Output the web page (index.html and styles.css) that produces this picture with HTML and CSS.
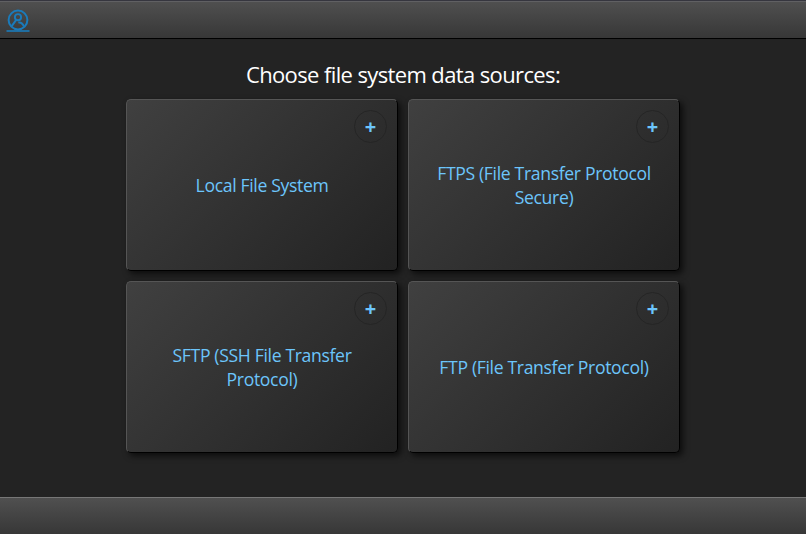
FILE: index.html
```html
<!DOCTYPE html>
<html lang="en">
<head>
<meta charset="utf-8">
<title>Data sources</title>
<link rel="stylesheet" href="styles.css">
</head>
<body>
<header class="bar bar-top">
<svg class="logo" width="24" height="24" viewBox="0 0 24 24" fill="none" stroke="#1a7bbb">
<circle cx="12" cy="11" r="9.4" stroke-width="2"/>
<circle cx="12" cy="8.2" r="3.1" stroke-width="1.9"/>
<path d="M10.2 10.8 5.7 17.2M12.3 13.5C15.6 13 17 14.8 18 17.7" stroke-width="2"/>
<path d="M.5 22h23" stroke-width="1.6"/>
</svg>
</header>
<main class="content">
<h1 class="title">Choose file system data sources:</h1>
<div class="cards">
<section class="card"><button class="add">+</button><span class="label">Local File System</span></section>
<section class="card"><button class="add">+</button><span class="label">FTPS (File Transfer Protocol<br>Secure)</span></section>
<section class="card"><button class="add">+</button><span class="label">SFTP (SSH File Transfer<br>Protocol)</span></section>
<section class="card"><button class="add">+</button><span class="label">FTP (File Transfer Protocol)</span></section>
</div>
</main>
<footer class="bar bar-bottom"></footer>
</body>
</html>
```
FILE: styles.css
```css
* { box-sizing: border-box; }
body {
  margin: 0;
  height: 534px;
  display: flex;
  flex-direction: column;
  overflow: hidden;
  background: #232323;
  color: #fff;
  font-family: "Open Sans", "Noto Sans", sans-serif;
}
.bar { background: linear-gradient(#505050, #373737); }
.bar-top {
  height: 39px;
  padding: 8px 6px 0;
  border-top: 1px solid #36363f;
  border-bottom: 1px solid #000;
  box-shadow: inset 0 1px #606063;
}
.bar-bottom { height: 37px; border-top: 1px solid #777; }
.logo { display: block; }
.content {
  flex: 1;
  display: flex;
  flex-direction: column;
  align-items: center;
}
.title {
  margin: 20px 0 10px;
  height: 30px;
  line-height: 30px;
  font-size: 22px;
  font-weight: 400;
  letter-spacing: -.62px;
  white-space: nowrap;
}
.cards {
  display: grid;
  grid-template-columns: 272px 272px;
  grid-auto-rows: 172px;
  gap: 10px;
}
.card {
  position: relative;
  display: flex;
  align-items: center;
  justify-content: center;
  border: 1px solid;
  border-color: #555 #000 #000 #555;
  border-radius: 5px;
  background: linear-gradient(135deg, #404040, #222);
  box-shadow: 3px 3px 6px rgba(0, 0, 0, .65);
}
.label {
  color: #6cc5fb;
  font-size: 17.6px;
  line-height: 24px;
  letter-spacing: -.34px;
  text-align: center;
  white-space: nowrap;
}
.add {
  position: absolute;
  top: 10px;
  right: 10px;
  width: 33px;
  height: 33px;
  padding: 0;
  border: 1px solid #252525;
  border-radius: 50%;
  background: transparent;
  color: #6cc5fb;
  font: 700 20px/31px "Open Sans", sans-serif;
}
```
